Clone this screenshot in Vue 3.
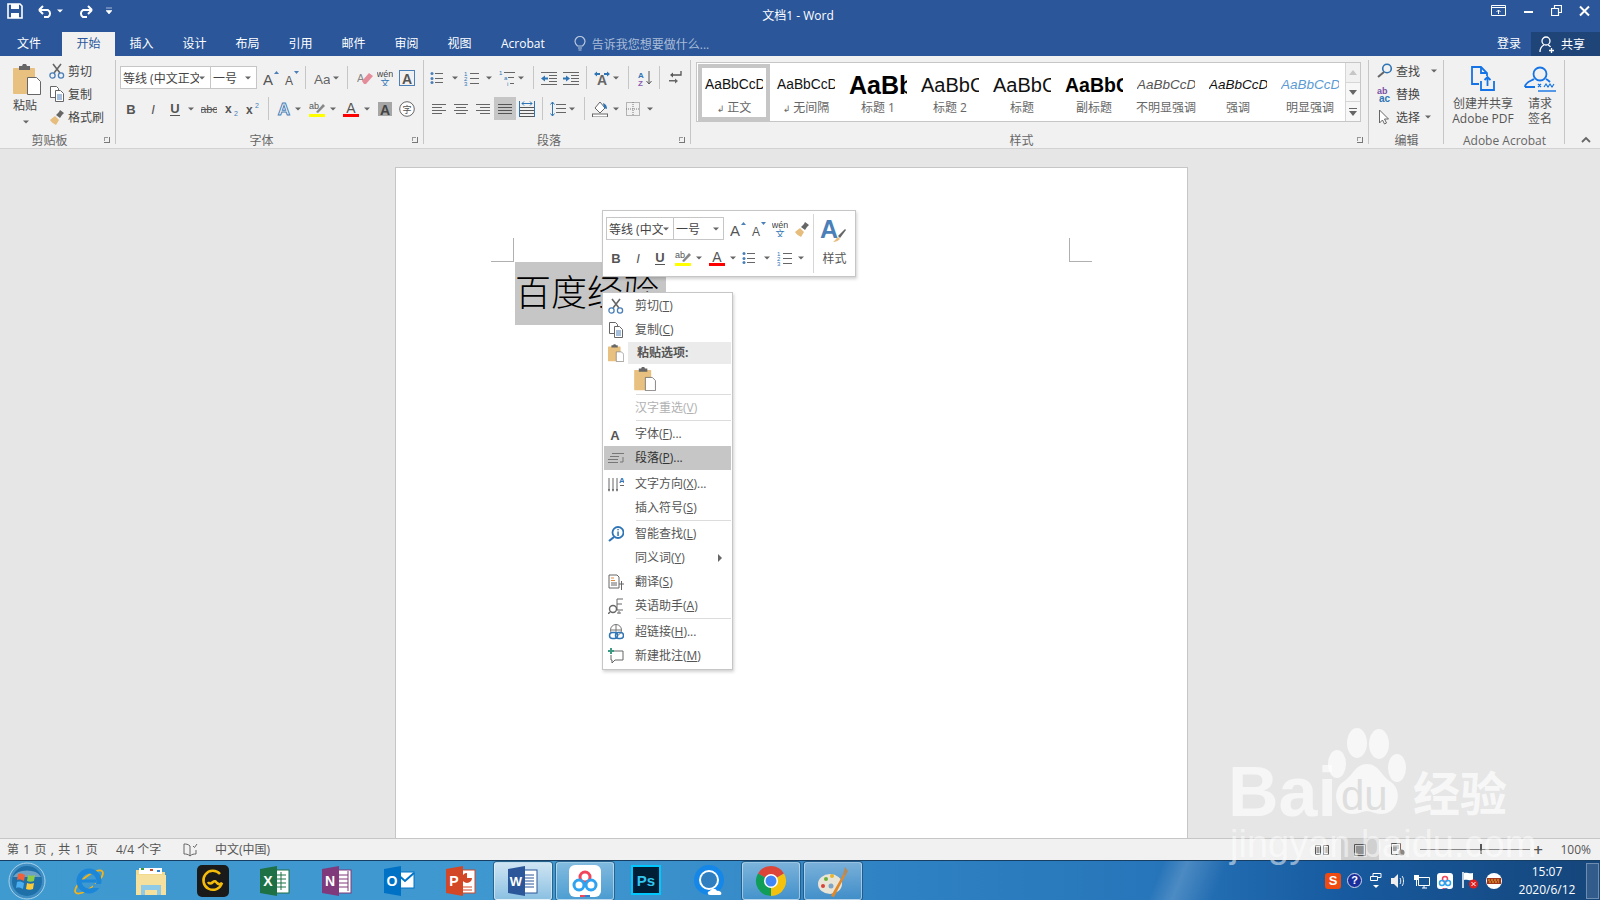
<template>
  <div class="app">
    <svg class="defs" width="0" height="0">
      <defs>
        <g id="caret"><path d="M0 6.5h6L3 9.5z" fill="#666" /></g>
        <g id="sep"><rect width="1" height="23" fill="#c6c6c6" /></g>
        <g id="cut" fill="none"><path d="M4 1l7 9M12 1L5 10" stroke="#666" stroke-width="1.6" /><circle cx="3.5" cy="12.5" r="2.6" stroke="#4a7fb8" stroke-width="1.3" /><circle cx="12" cy="12.5" r="2.6" stroke="#4a7fb8" stroke-width="1.3" /></g>
        <g id="copy" fill="#fff" stroke="#666"><path d="M1.5.5h6l2 2v9h-8z" /><path d="M6.5 4.5h5l3 3v8h-8z" /><path d="M8 9h5M8 11h5M8 13h5" stroke="#4a7fb8" /></g>
        <g id="brush"><path d="M1 11l5-4 4 4-3 5c-2-1-5-3-6-5z" fill="#e6bd7c" /><path d="M7 6l3-3 1-2 4 3-2 2-2 3z" fill="#666" /></g>
        <g id="paste"><rect x="0" y="4" width="22" height="26" rx="1" fill="#e8c07f" /><path d="M6 4V2h3l1-2h3l1 2h3v4H6z" fill="#666" /><path d="M14.500 13.500h9l4 4v13h-13z" fill="#fff" stroke="#666" /></g>
        <g id="grow"><text x="0" y="15" font-size="15" fill="#555">A</text><path d="M11 4l2.500-3L16 4z" fill="#4a7fb8" /></g>
        <g id="shrink"><text x="1" y="15" font-size="12" fill="#555">A</text><path d="M10 1l2.500 3L15 1z" fill="#4a7fb8" /></g>
        <g id="aa"><text x="0" y="14" font-size="13.500" fill="#666">Aa</text></g>
        <g id="eraser"><text x="0" y="12" font-size="11" fill="#888">A</text><path d="M5 11l7-8 4 3-7 8H7z" fill="#e58c9b" /></g>
        <g id="wen"><text x="8" y="7" font-size="9" text-anchor="middle" fill="#444">wén</text><text x="8" y="16" font-size="9" text-anchor="middle" fill="#2f75b5" class="cjk">文</text></g>
        <g id="boxa"><rect x=".5" y=".5" width="15" height="15" fill="none" stroke="#4a7fb8" /><text x="8" y="13.500" font-size="14" font-weight="700" text-anchor="middle" fill="#555">A</text></g>
        <g id="bold"><text x="8" y="13" font-size="13" font-weight="700" text-anchor="middle" fill="#555">B</text></g>
        <g id="italic"><text x="8" y="13" font-size="13" font-style="italic" text-anchor="middle" fill="#555">I</text></g>
        <g id="under"><text x="8" y="12" font-size="13" font-weight="700" text-anchor="middle" fill="#555">U</text><rect x="3" y="14" width="10" height="1" fill="#555" /></g>
        <g id="strike"><text x="8" y="12" font-size="11" text-anchor="middle" fill="#555">abc</text><rect x="0" y="8" width="16" height="1" fill="#555" /></g>
        <g id="sub"><text x="0" y="12" font-size="12" font-weight="700" fill="#555">x</text><text x="9" y="15" font-size="7" fill="#4a7fb8">2</text></g>
        <g id="sup"><text x="0" y="13" font-size="12" font-weight="700" fill="#555">x</text><text x="9" y="7" font-size="7" fill="#4a7fb8">2</text></g>
        <g id="fx"><text x="8" y="14" font-size="17" font-weight="700" text-anchor="middle" fill="#fff" stroke="#4a7fb8">A</text></g>
        <g id="hilite"><text x="0" y="8" font-size="9" fill="#555">ab</text><path d="M7 11l7-8 2 2-7 7z" fill="#888" /><rect y="13" width="16" height="4" fill="#ff0" /></g>
        <g id="red"><text x="8" y="12" font-size="14" text-anchor="middle" fill="#555">A</text><rect y="13" width="16" height="4" fill="#f00" /></g>
        <g id="shadeA"><rect x="1" y="1" width="14" height="14" fill="#a6a6a6" /><text x="8" y="13.500" font-size="14" font-weight="700" text-anchor="middle" fill="#444">A</text></g>
        <g id="ring"><circle cx="8" cy="8" r="7.300" fill="#fff" stroke="#666" /><text x="8" y="11.500" font-size="9" text-anchor="middle" fill="#555" class="cjk">字</text></g>
        <g id="bullets" fill="#666"><path d="M5 3h8v1H5zM5 8h8v1H5zM5 12h8v1H5z" /><circle cx="2" cy="3.500" r="1.500" fill="#4a7fb8" /><circle cx="2" cy="8.500" r="1.500" fill="#4a7fb8" /><circle cx="2" cy="12.500" r="1.500" fill="#4a7fb8" /></g>
        <g id="nums" fill="#666"><path d="M6 3h9v1H6zM6 8h9v1H6zM6 13h9v1H6z" /><text x="0" y="5.500" font-size="6" fill="#2f75b5">1</text><text x="0" y="10.500" font-size="6" fill="#2f75b5">2</text><text x="0" y="15.500" font-size="6" fill="#2f75b5">3</text></g>
        <g id="multi" fill="#666"><path d="M5 2h11v1H5zM9 7h6v1H9zM11 13h4v1h-4z" /><text x="0" y="5" font-size="6" fill="#2f75b5">1</text><text x="5" y="10" font-size="6" fill="#2f75b5">a</text><text x="8" y="16" font-size="6" fill="#2f75b5">i</text></g>
        <g id="dec" fill="#666"><path d="M0 2h16v1H0zM8 5h8v1H8zM8 8h8v1H8zM8 11h8v1H8zM0 14h16v1H0z" /><path d="M0 8.500l4-3v2h3v2H4v2z" fill="#2f75b5" /></g>
        <g id="inc" fill="#666"><path d="M0 2h16v1H0zM8 5h8v1H8zM8 8h8v1H8zM8 11h8v1H8zM0 14h16v1H0z" /><path d="M7 8.500l-4-3v2H0v2h3v2z" fill="#2f75b5" /></g>
        <g id="asian"><text x="8" y="15" font-size="14" font-weight="700" text-anchor="middle" fill="#666">A</text><path d="M0 4l3-2.500v1.500h3v2H3v1.500zM16 4l-3-2.500v1.500h-3v2h3v1.500z" fill="#2f75b5" /></g>
        <g id="sort"><text x="1" y="7.500" font-size="8" font-weight="700" fill="#2f75b5">A</text><text x="1" y="16" font-size="8" font-weight="700" fill="#8a5db0">Z</text><path d="M12 1v12M9.500 11l2.500 3 2.500-3" fill="none" stroke="#555" /></g>
        <g id="pil" fill="#666"><path d="M14 1v4H6" fill="none" stroke="#555" stroke-width="1.300" /><path d="M3 5l3-2.500v5z" fill="#555" /><path d="M2 10h6v1.500H2z" /><path d="M11 11l-3-2.500v5z" /></g>
        <g id="al" fill="#666"><path d="M0 3h14v1H0zM0 6h10v1H0zM0 9h14v1H0zM0 12h10v1H0z" /></g>
        <g id="ac" fill="#666"><path d="M0 3h14v1H0zM2 6h10v1H2zM0 9h14v1H0zM2 12h10v1H2z" /></g>
        <g id="ar" fill="#666"><path d="M0 3h14v1H0zM4 6h10v1H4zM0 9h14v1H0zM4 12h10v1H4z" /></g>
        <g id="aj" fill="#555"><path d="M4 7h14v1H4zM4 10h14v1H4zM4 13h14v1H4zM4 16h14v1H4z" /></g>
        <g id="ad" fill="#555"><path d="M0 6h16v1H0zM0 9h16v1H0zM0 12h16v1H0zM0 15h16v1H0z" /><path d="M3 2.500h10M3 2.500l2-2M3 2.500l2 2M13 2.500l-2-2M13 2.500l-2 2M.5 0v16M15.500 0v16" fill="none" stroke="#2f75b5" /></g>
        <g id="lines" fill="#666"><path d="M6 3h10v1H6zM6 7h10v1H6zM6 11h10v1H6z" /><path d="M2.500 1v14M.5 3.500l2-2.500 2 2.500M.5 12.500l2 2.500 2-2.500" fill="none" stroke="#2f75b5" /></g>
        <g id="shade"><path d="M3 7l5-6 5 6-5 5z" fill="#fff" stroke="#666" /><path d="M11 2c3 1 4 3 4 6l-3-1z" fill="#2f75b5" /><rect x=".5" y="13" width="15" height="3" fill="#fff" stroke="#666" /></g>
        <g id="bord"><rect x=".5" y="1.500" width="13" height="13" fill="none" stroke="#777" stroke-dasharray="1 1" /><path d="M7 1v14M0 8h14" stroke="#777" stroke-dasharray="1 1" /></g>
        <g id="find"><circle cx="10" cy="5.500" r="4.300" fill="none" stroke="#2f75b5" stroke-width="1.600" /><path d="M7 9l-6 5" stroke="#666" stroke-width="2" /></g>
        <g id="repl"><text x="0" y="7.500" font-size="9" font-weight="700" fill="#7a4fa5">ab</text><text x="2" y="15.500" font-size="10" font-weight="700" fill="#2f75b5">ac</text></g>
        <g id="select"><path d="M2.500 1v13l3-3 2 4 2-1-2-4h4z" fill="#fff" stroke="#666" /></g>
        <g id="pdf" fill="none" stroke="#1473e6" stroke-width="1.800"><path d="M8 18H1V1h9l6 6v3" /><path d="M10 1v6h6" /><path d="M10 15v9h13v-9" /><path d="M16.500 20v-9M13.500 14l3-3 3 3" /></g>
        <g id="sign" fill="none" stroke="#1473e6" stroke-width="1.800"><circle cx="16" cy="8" r="6.500" /><path d="M1 21c0-5 6-6 9-8M22 13c2 1 3 2 4 3M1 21h10" /><path d="M14 18l3 3M17 18l-3 3M20 21l2-3 2 3 2-3 2 3 2-3" stroke-width="1.200" /><path d="M14 25h18" stroke-width="1.400" /></g>
        <g id="styleA"><text x="0" y="20" font-size="25" font-weight="700" fill="#4a7fb8">A</text><path d="M13 24c3-2 3-4 5-5l2 2c-2 2-4 3-7 3z" fill="#e6bd7c" /><path d="M18 18l7-7 1 1-6 8z" fill="#666" /></g>
        <g id="mfont"><text x="7" y="14" font-size="13" font-weight="700" text-anchor="middle" fill="#555">A</text></g>
        <g id="mpara" fill="#777"><path d="M4 3h12v1H4zM2 6h9v1H2zM0 9h10v1H0zM0 12h10v1H0z" /><path d="M15 7v5h-3" fill="none" stroke="#777" /></g>
        <g id="mdir" fill="#666"><path d="M1 2v13M5 2v13M9 2v13" stroke="#666" /><path d="M0 13l1 3 1-3zM4 13l1 3 1-3zM8 13l1 3 1-3zM12 9h4v1h-4z" /><text x="11" y="7" font-size="8" font-weight="700" fill="#2f75b5">A</text></g>
        <g id="msmart"><circle cx="10" cy="6.500" r="5.500" fill="#fff" stroke="#2f75b5" stroke-width="1.800" /><path d="M9.300 3h1.500v1.300H9.300zM9.300 5.500h1.500V10H9.300z" fill="#2f75b5" /><path d="M6 11l-5 4" stroke="#2f75b5" stroke-width="2.200" /></g>
        <g id="mtrans" fill="none" stroke="#666"><path d="M1 1h8l2 2v11H1z" /><path d="M3 4h3M3 6.500h4" stroke="#e3893a" /><path d="M3 9h6M3 11h6" /><path d="M11 10h5M13.500 7v9" /></g>
        <g id="meng" fill="none" stroke="#666"><circle cx="5" cy="11" r="3.500" stroke-width="1.400" /><path d="M2 14l-2 2" stroke-width="1.400" /><path d="M15 1H9v11h6M9 6h5" /><circle cx="11" cy="15" r="1.200" /></g>
        <g id="mlink"><circle cx="8" cy="6" r="5.500" fill="none" stroke="#777" /><path d="M3 6h10M8 .5v11" stroke="#777" /><rect x="1.500" y="8.500" width="8" height="6" rx="3" fill="#fff" stroke="#2f75b5" stroke-width="1.500" /><rect x="7.500" y="8.500" width="8" height="6" rx="3" fill="none" stroke="#2f75b5" stroke-width="1.500" /></g>
        <g id="mnote"><path d="M5 3h10v9H7l-3 3v-3H3V7" fill="none" stroke="#666" /><path d="M2 0h2v2h2v2H4v2H2V4H0V2h2z" fill="#3c9a84" /></g>
        <g id="orb"><circle cx="19" cy="19" r="18" fill="#3f8fc4" stroke="#a9d3ea" /><circle cx="19" cy="19" r="15" fill="#1f6fa8" /><path d="M5 15a15 10 0 0 1 28 0z" fill="#fff" opacity=".35" /><path d="M10 12c3-1 5 0 7 1l-1 6c-2-1-4-2-7-1z" fill="#f0603a" /><path d="M20 13c2 1 5 1 7 0l-1 6c-2 1-5 1-7 0z" fill="#8ccb45" /><path d="M9 20c3-1 5 0 7 1l-1 6c-2-1-4-2-7-1z" fill="#4aaef0" /><path d="M19 21c2 1 5 1 7 0l-1 6c-2 1-5 1-7 0z" fill="#fbcb3a" /></g>
        <g id="ie"><ellipse cx="16" cy="17" rx="17" ry="6" transform="rotate(-38 16 17)" fill="none" stroke="#f2b316" stroke-width="1.800" /><circle cx="16" cy="16" r="10" fill="none" stroke="#1c86d8" stroke-width="5" /><rect x="8" y="14.500" width="15" height="3" fill="#1c86d8" /><path d="M20 19h8v4h-8z" fill="#3f97cf" /></g>
        <g id="folder"><path d="M1 5h10l2 2h17v22H1z" fill="#f2d98b" /><rect x="4" y="3" width="23" height="6" fill="#fff" /><rect x="6" y="3" width="3" height="2" fill="#3c9a3c" /><rect x="15" y="4" width="3" height="2" fill="#c84a2e" /><rect x="22" y="5" width="3" height="2" fill="#2f7fd0" /><rect x="1" y="10" width="30" height="20" fill="#f5e09e" /><path d="M6 30V20h20v10h-4v-5H10v5z" fill="#8fcbe8" /></g>
        <g id="gold"><rect width="32" height="32" rx="5" fill="#1a1a1a" /><path d="M23 9a9.500 9.500 0 1 0 2 9c-2 2-4 1-5 0s-2-3-4-1-4 2-5 0" fill="none" stroke="#f5bb0b" stroke-width="2.500" /></g>
        <g id="word"><rect x="14" y="5" width="16" height="23" fill="#fff" stroke="#2b579a" /><path d="M18 10h9M18 13h9M18 16h9M18 19h9M18 22h9" stroke="#2b579a" /><path d="M1 4L18 1v30L1 28z" fill="#2b579a" /><text x="9" y="21" font-size="13" font-weight="700" text-anchor="middle" fill="#fff">W</text></g>
        <g id="xl"><rect x="14" y="5" width="16" height="23" fill="#fff" stroke="#1e7145" /><path d="M18 10h9M18 14h9M18 18h9M18 22h9M22 7v18" stroke="#1e7145" /><path d="M1 4L18 1v30L1 28z" fill="#1e7145" /><text x="9" y="21" font-size="14" font-weight="700" text-anchor="middle" fill="#fff">X</text></g>
        <g id="one"><rect x="14" y="5" width="16" height="23" fill="#fff" stroke="#80397b" /><path d="M18 10h9M18 14h9M18 18h9M18 22h9M27 6v20" stroke="#80397b" /><path d="M1 4L18 1v30L1 28z" fill="#80397b" /><text x="9" y="21" font-size="14" font-weight="700" text-anchor="middle" fill="#fff">N</text></g>
        <g id="out"><rect x="13" y="7" width="18" height="16" fill="#fff" stroke="#0072c6" /><path d="M13 8l9 8 9-8" fill="none" stroke="#0072c6" stroke-width="2" /><path d="M1 4L18 1v30L1 28z" fill="#0072c6" /><text x="9" y="21" font-size="14" font-weight="700" text-anchor="middle" fill="#fff">O</text></g>
        <g id="ppt"><rect x="14" y="5" width="16" height="23" fill="#fff" stroke="#d24726" /><path d="M22 8a5 5 0 1 0 5 5h-5z" fill="#d24726" /><path d="M18 22h9M18 25h9" stroke="#d24726" /><path d="M1 4L18 1v30L1 28z" fill="#d24726" /><text x="9" y="21" font-size="14" font-weight="700" text-anchor="middle" fill="#fff">P</text></g>
        <g id="pan"><rect width="32" height="32" rx="6" fill="#fff" /><circle cx="16" cy="12" r="5" fill="none" stroke="#f0455a" stroke-width="3" /><circle cx="10" cy="20" r="5" fill="none" stroke="#2fa3f0" stroke-width="3" /><circle cx="22" cy="20" r="5" fill="none" stroke="#2fa3f0" stroke-width="3" /><rect x="11" y="30" width="5" height="2" fill="#f0455a" /><rect x="16" y="30" width="5" height="2" fill="#2f7fd0" /></g>
        <g id="ps"><rect x="1" y="1" width="28" height="28" fill="#001e36" stroke="#00c8ff" stroke-width="2" /><text x="15" y="21" font-size="15" font-weight="700" text-anchor="middle" fill="#31c5f0">Ps</text></g>
        <g id="qq"><circle cx="16" cy="15" r="12.500" fill="#fff" stroke="#1587e8" stroke-width="5" /><circle cx="16" cy="15" r="8" fill="#2f7fc0" /><path d="M17 30c-3 0-3-4 0-4 1-3 6-3 7 0 4-1 6 4 3 4z" fill="#fff" /></g>
        <g id="chrome"><path d="M3 8.500A15 15 0 0 1 29 8.500L16 16z" fill="#db4437" /><path d="M29 8.500A15 15 0 0 1 16 31L16 16z" fill="#f4c20d" /><path d="M16 31A15 15 0 0 1 3 8.500L16 16z" fill="#0f9d58" /><circle cx="16" cy="16" r="7" fill="#fff" /><circle cx="16" cy="16" r="5.500" fill="#4285f4" /></g>
        <g id="palette"><ellipse cx="13" cy="19" rx="12" ry="10" fill="#e9e5d6" /><circle cx="6" cy="21" r="2" fill="#d9433c" /><circle cx="9" cy="14" r="2" fill="#6aaf3c" /><circle cx="15" cy="11" r="2" fill="#e8b52f" /><circle cx="14" cy="21" r="2.500" fill="#7fa4c4" /><path d="M14 31l13-23 2 1-12 23z" fill="#e0872a" /><path d="M26 9l2-7 3 4-2 4z" fill="#b48a5a" /></g>
      </defs>
    </svg>

    <header class="title-bar">
      <div class="qat">
        <svg class="save" width="16" height="16" viewBox="0 0 16 16"><path d="M1 1h12l2 2v12H1z" fill="none" stroke="#fff" stroke-width="1.600" /><path d="M4 1h8v5H4zM4 10h8v5H4z" fill="#fff" /></svg>
        <svg class="undo" width="17" height="14" viewBox="0 0 17 14"><path d="M2 6h9a4 4 0 0 1 0 7H7M2 6l4-4M2 6l4 4" fill="none" stroke="#fff" stroke-width="2" /></svg>
        <svg class="qc" width="6" height="16" viewBox="0 0 6 16"><path d="M0 6.500h6L3 9.500z" fill="#fff" /></svg>
        <svg class="redo" width="17" height="14" viewBox="0 0 17 14"><path d="M15 6H6a4 4 0 0 0 0 7h4M15 6l-4-4M15 6l-4 4" fill="none" stroke="#fff" stroke-width="2" /></svg>
        <svg class="qcust" width="6" height="8" viewBox="0 0 6 8"><path d="M0 1h6M0 3.500h6L3 7z" fill="#fff" stroke="#fff" stroke-width=".6" /></svg>
      </div>
      <div class="doc-title">文档1 - Word</div>
      <div class="win">
        <svg width="16" height="12" viewBox="0 0 16 12"><path d="M.5.500h14v10H.5zM.5 2.500h14" fill="none" stroke="#fff" /><path d="M7.500 9V5M5.500 7l2-2 2 2" fill="none" stroke="#fff" /></svg>
        <svg width="10" height="12" viewBox="0 0 10 12"><rect y="6" width="9" height="2" fill="#fff" /></svg>
        <svg width="11" height="12" viewBox="0 0 11 12"><path d="M.5 3.500h7v7h-7zM3.500 3V.5h7v7H8" fill="none" stroke="#fff" stroke-width="1.200" /></svg>
        <svg width="11" height="12" viewBox="0 0 11 12"><path d="M1 1.500l9 9M10 1.500l-9 9" stroke="#fff" stroke-width="2" /></svg>
      </div>
    </header>

    <nav class="tabs">
      <span class="tab file">文件</span>
      <span v-for="t in tabs" :key="t" class="tab" :class="{ active: t === '开始' }">{{ t }}</span>
      <span class="tab acrobat">Acrobat</span>
      <span class="tell">
        <svg width="12" height="16" viewBox="0 0 12 16"><path d="M3.500 10C2 8.500 1 7.500 1 5.500a5 5 0 0 1 10 0c0 2-1 3-2.500 4.500zM4 12h4M4.500 14h3" fill="none" stroke="#b8c7de" stroke-width="1.200" /></svg>
        告诉我您想要做什么...
      </span>
      <span class="login">登录</span>
      <span class="share">
        <svg width="17" height="17" viewBox="0 0 17 17"><circle cx="7" cy="5" r="4" fill="none" stroke="#fff" stroke-width="1.300" /><path d="M1 16c0-4 2-6 4-7M9 9c1 .5 2 1 2.500 2M12.500 12v5M10 14.500h5" fill="none" stroke="#fff" stroke-width="1.300" /></svg>
        共享
      </span>
    </nav>

    <section class="ribbon">
      <div class="group g-clip">
        <div class="clip">
          <div class="paste-btn">
            <svg width="28" height="31" viewBox="0 0 28 31"><use href="#paste" /></svg>
            <span>粘贴</span>
            <svg class="paste-caret" width="6" height="16" viewBox="0 0 6 16"><use href="#caret" /></svg>
          </div>
          <div class="clip-list">
            <div class="clip-item"><svg width="16" height="16" viewBox="0 0 16 16"><use href="#cut" /></svg>剪切</div>
            <div class="clip-item"><svg width="16" height="16" viewBox="0 0 16 16"><use href="#copy" /></svg>复制</div>
            <div class="clip-item"><svg width="16" height="16" viewBox="0 0 16 16"><use href="#brush" /></svg>格式刷</div>
          </div>
        </div>
        <div class="g-label">剪贴板</div>
        <i class="launcher"></i>
      </div>

      <div class="group g-font">
        <div class="row first">
          <div class="combo combo-font"><span class="combo-text">等线 (中文正文)</span><svg width="6" height="16" viewBox="0 0 6 16"><use href="#caret" /></svg></div>
          <div class="combo combo-size"><span class="combo-text">一号</span><svg width="6" height="16" viewBox="0 0 6 16"><use href="#caret" /></svg></div>
          <svg v-for="t in fontRow1" :key="t.k" class="ic" :width="t.w" :height="t.h" :viewBox="`0 0 ${t.w} ${t.h}`" :style="{ marginLeft: t.ml + 'px' }"><use :href="'#' + t.i" /></svg>
        </div>
        <div class="row">
          <svg v-for="t in fontRow2" :key="t.k" class="ic" :width="t.w" :height="t.h" :viewBox="`0 0 ${t.w} ${t.h}`" :style="{ marginLeft: t.ml + 'px' }"><use :href="'#' + t.i" /></svg>
        </div>
        <div class="g-label">字体</div>
        <i class="launcher"></i>
      </div>

      <div class="group g-para">
        <div v-for="(row, n) in paraRows" :key="n" class="row" :class="{ first: n === 0 }">
          <svg v-for="t in row" :key="t.k" class="ic" :class="{ pressed: t.i === 'aj' }" :width="t.w" :height="t.h" :viewBox="`0 0 ${t.w} ${t.h}`" :style="{ marginLeft: t.ml + 'px' }"><use :href="'#' + t.i" /></svg>
        </div>
        <div class="g-label">段落</div>
        <i class="launcher"></i>
      </div>

      <div class="group g-styles">
        <div class="gallery">
          <div v-for="s in styles" :key="s.name" class="style-item" :class="{ selected: s.on }">
            <div class="sample" :class="s.cls">{{ s.sample }}</div>
            <div class="style-name"><span v-if="s.mark" class="para-mark">↲</span>{{ s.name }}</div>
          </div>
          <div class="scroll">
            <span class="sb dim"><svg width="8" height="5" viewBox="0 0 8 5"><path d="M0 5l4-5 4 5z" fill="#c6c6c6" /></svg></span>
            <span class="sb"><svg width="8" height="5" viewBox="0 0 8 5"><path d="M0 0l4 5 4-5z" fill="#666" /></svg></span>
            <span class="sb"><svg width="8" height="8" viewBox="0 0 8 8"><path d="M0 0h8v1H0zM0 3l4 5 4-5z" fill="#666" /></svg></span>
          </div>
        </div>
        <div class="g-label">样式</div>
        <i class="launcher"></i>
      </div>

      <div class="group g-edit">
        <div class="edit-list">
          <div class="edit-item"><svg width="16" height="16" viewBox="0 0 16 16"><use href="#find" /></svg>查找<svg class="ec1" width="6" height="16" viewBox="0 0 6 16"><use href="#caret" /></svg></div>
          <div class="edit-item"><svg width="16" height="16" viewBox="0 0 16 16"><use href="#repl" /></svg>替换</div>
          <div class="edit-item"><svg width="16" height="16" viewBox="0 0 16 16"><use href="#select" /></svg>选择<svg class="ec2" width="6" height="16" viewBox="0 0 6 16"><use href="#caret" /></svg></div>
        </div>
        <div class="g-label">编辑</div>
      </div>

      <div class="group g-acro">
        <div class="acro">
          <div class="acro-btn a1"><svg width="24" height="26" viewBox="0 0 24 26"><use href="#pdf" /></svg><span>创建并共享<br />Adobe PDF</span></div>
          <div class="acro-btn a2"><svg width="33" height="27" viewBox="0 0 33 27"><use href="#sign" /></svg><span>请求<br />签名</span></div>
        </div>
        <div class="g-label">Adobe Acrobat</div>
      </div>

      <svg class="collapse" width="10" height="7" viewBox="0 0 10 7"><path d="M1 6l4-4 4 4" fill="none" stroke="#666" stroke-width="1.800" /></svg>
    </section>

    <main class="doc">
      <div class="page">
        <i class="crop crop-l"></i>
        <i class="crop crop-r"></i>
        <span class="selected-text">百度经验</span>
      </div>
    </main>

    <footer class="status">
      <span class="s1">第 1 页 , 共 1 页</span>
      <span class="s2">4/4 个字</span>
      <svg class="s3" width="15" height="14" viewBox="0 0 15 14"><path d="M7 3C5 1 3 1 1 1v10c2 0 4 0 6 2 2-2 4-2 6-2V7M7 3v10M10 3l1.500 1.500L14 1" fill="none" stroke="#666" /></svg>
      <span class="s4">中文(中国)</span>
      <div class="st-right">
        <span class="view"><svg width="14" height="12" viewBox="0 0 14 12"><path d="M.5 1.500h5v9h-5zM8.500 1.500h5v9h-5zM1.500 4h3M1.500 6h3M1.500 8h3M9.500 4h3M9.500 6h3M9.500 8h3" fill="none" stroke="#555" /></svg></span>
        <span class="view on"><svg width="14" height="12" viewBox="0 0 14 12"><path d="M1.500.5h11v11h-11zM3 3h8M3 5h8M3 7h8M3 9h8" fill="none" stroke="#555" /></svg></span>
        <span class="view"><svg width="14" height="13" viewBox="0 0 14 13"><path d="M.5.500h9v11h-9zM2 3h6M2 5h6M2 7h4" fill="none" stroke="#555" /><circle cx="10.500" cy="9.500" r="3" fill="#888" /></svg></span>
        <span class="zoom-slider"><i class="zoom-thumb"></i></span>
        <span class="plus">+</span>
        <span class="pct">100%</span>
      </div>
    </footer>

    <div class="taskbar">
      <svg class="orb" width="38" height="38" viewBox="0 0 38 38"><use href="#orb" /></svg>
      <div class="slots">
        <div v-for="s in apps" :key="s.i" class="slot" :class="{ btn: s.btn, active: s.active }">
          <svg width="32" height="32" viewBox="0 0 32 32"><use :href="'#' + s.i" /></svg>
        </div>
      </div>
      <div class="tray">
        <span class="t-s">S</span>
        <span class="t-help">?</span>
        <svg class="t-win" width="12" height="18" viewBox="0 0 12 18"><path d="M.5 4.500h7v4h-7zM3 4V1.500h8v4H8" fill="none" stroke="#fff" /><path d="M3 13h6l-3 3z" fill="#fff" /></svg>
        <svg class="t-vol" width="15" height="14" viewBox="0 0 15 14"><path d="M0 4h3l4-4v14l-4-4H0z" fill="#eee" /><path d="M9 4c1 1 1 5 0 6M11 2c2 2 2 8 0 10" fill="none" stroke="#eee" /></svg>
        <svg class="t-net" width="17" height="17" viewBox="0 0 17 17"><path d="M5.500 5.500h11v8h-11zM9 16h5M11 14v2" fill="none" stroke="#fff" /><path d="M2 0v3M4.500 0v3M1 3h5v5H4v6H3V8H1z" fill="#fff" /></svg>
        <svg class="t-pan" width="16" height="16" viewBox="0 0 32 32"><use href="#pan" /></svg>
        <svg class="t-flag" width="16" height="17" viewBox="0 0 16 17"><path d="M1 0v16" stroke="#fff" stroke-width="1.500" /><path d="M2 1c3-1 5 1 9 0v7c-4 1-6-1-9 0z" fill="#fff" /><circle cx="11.500" cy="12" r="4.500" fill="#e02020" /><path d="M9.500 10l4 4M13.500 10l-4 4" stroke="#fff" /></svg>
        <svg class="t-red" width="16" height="16" viewBox="0 0 16 16"><circle cx="8" cy="8" r="8" fill="#fff" /><rect x="1" y="5" width="14" height="6" fill="#a4381c" /><path d="M2 7h12M3 9h10" stroke="#e8b52f" stroke-dasharray="2 1" /></svg>
        <div class="clock"><span>15:07</span><span>2020/6/12</span></div>
        <i class="show-desktop"></i>
      </div>
    </div>

    <!-- floating mini toolbar -->
    <div class="mini">
      <div class="mini-rows">
        <div class="row mini-first">
          <div class="combo mini-font"><span class="combo-text">等线 (中文正文)</span><svg width="6" height="16" viewBox="0 0 6 16"><use href="#caret" /></svg></div>
          <div class="combo mini-size"><span class="combo-text">一号</span><svg width="6" height="16" viewBox="0 0 6 16"><use href="#caret" /></svg></div>
          <svg v-for="t in miniRow1" :key="t.k" class="ic" :width="t.w" :height="t.h" :viewBox="`0 0 ${t.w} ${t.h}`" :style="{ marginLeft: t.ml + 'px' }"><use :href="'#' + t.i" /></svg>
        </div>
        <div class="row mini-second">
          <svg v-for="t in miniRow2" :key="t.k" class="ic" :width="t.w" :height="t.h" :viewBox="`0 0 ${t.w} ${t.h}`" :style="{ marginLeft: t.ml + 'px' }"><use :href="'#' + t.i" /></svg>
        </div>
      </div>
      <div class="mini-style">
        <svg width="30" height="26" viewBox="0 0 30 26"><use href="#styleA" /></svg>
        <span>样式</span>
      </div>
    </div>

    <!-- context menu -->
    <div class="menu">
      <template v-for="m in menu" :key="m.id">
        <div v-if="m.sep" class="menu-sep"></div>
        <div v-else-if="m.head" class="menu-row head">
          <svg class="menu-ic" width="16" height="18" viewBox="0 0 28 31"><use href="#paste" /></svg>
          <span class="head-text">粘贴选项:</span>
        </div>
        <div v-else-if="m.pasteOpt" class="paste-opt">
          <svg width="22" height="24" viewBox="0 0 28 31"><use href="#paste" /></svg>
        </div>
        <div v-else class="menu-row" :class="{ hover: m.hover, off: m.off, gap: m.gap }">
          <span class="menu-ic"><svg v-if="m.i" width="16" height="16" viewBox="0 0 16 16"><use :href="'#' + m.i" /></svg></span>
          <span>{{ m.t }}(<u>{{ m.k }}</u>){{ m.rest }}</span>
          <svg v-if="m.sub" class="menu-arrow" width="4" height="8" viewBox="0 0 4 8"><path d="M0 0l4 4-4 4z" fill="#666" /></svg>
        </div>
      </template>
    </div>

    <!-- site watermark -->
    <div class="mark">
      <svg class="paw" width="80" height="90" viewBox="0 0 80 90">
        <ellipse cx="30" cy="15" rx="10" ry="15" fill="#f7f7f7" />
        <ellipse cx="52" cy="16" rx="10" ry="15" fill="#f7f7f7" />
        <ellipse cx="10" cy="36" rx="9" ry="14" fill="#f7f7f7" />
        <ellipse cx="70" cy="40" rx="9" ry="14" fill="#f7f7f7" />
        <path d="M40 36c12 0 14 12 24 18 12 8 8 32-10 32-6 0-10-3-14-3s-8 3-14 3C8 86 4 62 16 54c10-6 12-18 24-18z" fill="#f7f7f7" />
      </svg>
      <span class="m-bai">Bai</span>
      <span class="m-du">du</span>
      <span class="m-jy">经验</span>
      <span class="m-url">jingyan.baidu.com</span>
    </div>
  </div>
</template>

<script setup>
// turn [icon, centre x, w, h] lists into flow items with computed left margins
const place = (origin, list) => {
  let cur = origin
  return list.map(([i, c, w = 16, h = 16], k) => {
    const ml = c - w / 2 - cur
    cur = c + w / 2
    return { i, w, h, ml, k }
  })
}

const car = (c) => ['caret', c, 6]
const sep = (c) => ['sep', c, 1, 23]

const tabs = ['开始', '插入', '设计', '布局', '引用', '邮件', '审阅', '视图']

const fontRow1 = place(258, [
  ['grow', 272], ['shrink', 293], sep(306), ['aa', 323], car(337), sep(348),
  ['eraser', 366], ['wen', 386], ['boxa', 408]
])
const fontRow2 = place(116, [
  ['bold', 131], ['italic', 153], ['under', 175], car(191), ['strike', 209], ['sub', 233], ['sup', 254],
  sep(268), ['fx', 284], car(298), ['hilite', 317], car(333), ['red', 351], car(367), ['shadeA', 385], ['ring', 407]
])

const paraRows = [
  place(424, [
    ['bullets', 438], car(455), ['nums', 472], car(489), ['multi', 507], car(521), sep(533),
    ['dec', 549], ['inc', 571], sep(586), ['asian', 602], car(616), sep(628), ['sort', 645], sep(659), ['pil', 675]
  ]),
  place(424, [
    ['al', 440], ['ac', 462], ['ar', 484], ['aj', 505, 22, 23], ['ad', 527], sep(542), ['lines', 558], car(572), sep(584),
    ['shade', 600], car(616), ['bord', 634], car(650)
  ])
]

const styles = [
  { name: '正文', sample: 'AaBbCcDd', cls: 's-n', on: true, mark: true },
  { name: '无间隔', sample: 'AaBbCcDd', cls: 's-n', mark: true },
  { name: '标题 1', sample: 'AaBb', cls: 's-h1' },
  { name: '标题 2', sample: 'AaBbC', cls: 's-h2' },
  { name: '标题', sample: 'AaBbC', cls: 's-h2' },
  { name: '副标题', sample: 'AaBbC', cls: 's-h3' },
  { name: '不明显强调', sample: 'AaBbCcDd', cls: 's-i1' },
  { name: '强调', sample: 'AaBbCcDd', cls: 's-i2' },
  { name: '明显强调', sample: 'AaBbCcDd', cls: 's-i3' }
]

const apps = [
  { i: 'ie' }, { i: 'folder' }, { i: 'gold' }, { i: 'xl' }, { i: 'one' }, { i: 'out' }, { i: 'ppt' },
  { i: 'word', btn: true, active: true }, { i: 'pan', btn: true }, { i: 'ps' }, { i: 'qq' },
  { i: 'chrome', btn: true }, { i: 'palette', btn: true }
]

const miniRow1 = place(725, [['grow', 739], ['shrink', 760], ['wen', 781], ['brush', 803]])
const miniRow2 = place(603, [
  ['bold', 616], ['italic', 638], ['under', 660], ['hilite', 683], car(699), ['red', 717], car(733),
  ['bullets', 750], car(767), ['nums', 785], car(801)
])

const menu = [
  { id: 1, t: '剪切', k: 'T', i: 'cut' },
  { id: 2, t: '复制', k: 'C', i: 'copy' },
  { id: 3, head: true },
  { id: 4, pasteOpt: true },
  { id: 5, sep: true },
  { id: 6, t: '汉字重选', k: 'V', off: true },
  { id: 7, sep: true },
  { id: 8, t: '字体', k: 'F', rest: '...', i: 'mfont' },
  { id: 9, t: '段落', k: 'P', rest: '...', i: 'mpara', hover: true },
  { id: 10, t: '文字方向', k: 'X', rest: '...', i: 'mdir', gap: true },
  { id: 11, t: '插入符号', k: 'S' },
  { id: 12, sep: true },
  { id: 13, t: '智能查找', k: 'L', i: 'msmart' },
  { id: 14, t: '同义词', k: 'Y', sub: true },
  { id: 15, t: '翻译', k: 'S', i: 'mtrans' },
  { id: 16, t: '英语助手', k: 'A', i: 'meng' },
  { id: 17, sep: true },
  { id: 18, t: '超链接', k: 'H', rest: '...', i: 'mlink' },
  { id: 19, t: '新建批注', k: 'M', i: 'mnote' }
]
</script>

<style>
html, body { margin: 0; background: #e6e6e6; }
</style>

<style scoped>
.app {
  position: relative;
  display: flex;
  flex-direction: column;
  width: 1600px;
  height: 900px;
  overflow: hidden;
  font-family: "Open Sans", "Noto Sans CJK SC", sans-serif;
  font-size: 12px;
  color: #444;
}
.defs { position: absolute; }
text { font-family: "Liberation Sans", sans-serif; }
text.cjk { font-family: "Noto Sans CJK SC", sans-serif; }

.title-bar {
  display: flex;
  align-items: center;
  justify-content: space-between;
  height: 32px;
  flex: none;
  background: #2b579a;
  color: #fff;
}
.qat { display: flex; align-items: center; width: 200px; padding-left: 7px; box-sizing: border-box; margin-top: -10px; }
.undo { margin-left: 14px; }
.qc { margin-left: 3px; }
.redo { margin-left: 14px; }
.qcust { margin-left: 12px; }
.doc-title { width: 800px; text-align: center; margin-top: -2px; margin-left: -95px; }
.win { display: flex; align-items: center; gap: 17px; padding-right: 10px; margin-top: -10px; }

.tabs {
  display: flex;
  align-items: stretch;
  height: 24px;
  flex: none;
  background: #2b579a;
  color: #fff;
  line-height: 23px;
}
.tab { width: 53px; text-align: center; }
.tab.file { width: 62px; text-align: left; padding-left: 17px; box-sizing: border-box; }
.tab.active { background: #f1f1f1; color: #2b579a; }
.tab.acrobat { width: auto; padding: 0 14px 0 15px; }
.tell { display: flex; align-items: center; gap: 6px; margin-left: 15px; color: #a9bcd8; }
.login { margin-left: auto; margin-right: 10px; }
.share { display: flex; align-items: center; gap: 5px; width: 69px; padding-left: 8px; box-sizing: border-box; background: #1e4478; }

.ribbon {
  position: relative;
  display: flex;
  height: 93px;
  flex: none;
  padding-top: 4px;
  box-sizing: border-box;
  background: #f1f1f1;
  border-bottom: 1px solid #d2d2d2;
}
.group { position: relative; display: flex; flex-direction: column; height: 88px; flex: none; color: #444; }
.group::after { content: ''; position: absolute; top: 0; right: 0; bottom: 4px; width: 1px; background: #c6c6c6; }
.g-label { margin-top: auto; margin-bottom: -2px; height: 18px; line-height: 18px; text-align: center; color: #666; }
.launcher { position: absolute; right: 6px; bottom: 5px; width: 6px; height: 6px; border-right: 1px solid #777; border-bottom: 1px solid #777; box-sizing: border-box; }
.launcher::before { content: ''; position: absolute; left: 0; top: 0; width: 3px; height: 3px; border-top: 1px solid #999; border-left: 1px solid #999; }
.g-clip { width: 116px; }
.g-font { width: 308px; }
.g-para { width: 267px; }
.g-styles { width: 678px; }
.g-edit { width: 75px; }
.g-acro { width: 121px; }
.g-clip .g-label, .g-font .g-label, .g-para .g-label, .g-styles .g-label { padding-right: 17px; }

.clip { display: flex; }
.paste-btn { display: flex; flex-direction: column; align-items: flex-start; width: 49px; padding: 4px 0 0 13px; box-sizing: border-box; line-height: 17px; }
.paste-btn span { margin-top: 2px; }
.paste-btn .paste-caret { margin: 0 0 0 10px; }
.clip-list { display: flex; flex-direction: column; margin-top: -1px; }
.clip-item { display: flex; align-items: center; gap: 3px; height: 23px; }

.row { display: flex; align-items: center; height: 23px; margin-top: 8px; }
.row.first { margin-top: 6px; }
.g-font .row.first { padding-left: 4px; }
.ic { flex: none; }
.ic.pressed { background: #c6c6c6; }

.combo {
  display: flex;
  align-items: center;
  height: 23px;
  box-sizing: border-box;
  border: 1px solid #c6c6c6;
  background: #fff;
  padding: 0 5px 0 2px;
  color: #444;
}
.combo-text { flex: 1; min-width: 0; overflow: hidden; white-space: nowrap; }
.combo-font { width: 91px; }
.combo-size { width: 47px; margin-left: -1px; }

.gallery {
  position: relative;
  display: flex;
  width: 665px;
  height: 60px;
  margin: 2px 0 0 5px;
  padding: 1px 0 0 1px;
  box-sizing: border-box;
  background: #fff;
  border: 1px solid #c6c6c6;
}
.style-item { width: 72px; height: 57px; flex: none; box-sizing: border-box; padding-top: 8px; text-align: center; }
.style-item.selected { border: 4px solid #c6c6c6; padding-top: 4px; }
.sample { width: 58px; height: 26px; margin: 0 auto; overflow: hidden; white-space: nowrap; text-align: left; font-family: "Liberation Sans", sans-serif; line-height: 26px; color: #111; }
.s-n { font-size: 13.8px; }
.s-h1 { font-size: 25px; font-weight: 700; color: #000; }
.s-h2 { font-size: 20px; }
.s-h3 { font-size: 19.5px; font-weight: 700; color: #000; }
.s-i1 { font-size: 13.5px; font-style: italic; color: #555; }
.s-i2 { font-size: 13.5px; font-style: italic; }
.s-i3 { font-size: 13.5px; font-style: italic; color: #5b9bd5; }
.style-name { height: 20px; line-height: 20px; color: #666; white-space: nowrap; }
.para-mark { margin-right: 3px; font-family: "DejaVu Sans", sans-serif; font-size: 9px; }
.scroll { display: flex; flex-direction: column; position: absolute; right: 0; top: 0; bottom: 0; width: 14px; border-left: 1px solid #d6d6d6; background: #f7f7f7; }
.sb { flex: 1; display: flex; align-items: center; justify-content: center; border-bottom: 1px solid #d6d6d6; }
.sb:last-child { border-bottom: 0; }
.sb.dim { background: #f1f1f1; }

.edit-list { display: flex; flex-direction: column; margin-top: -1px; padding-left: 8px; }
.edit-item { position: relative; display: flex; align-items: center; gap: 3px; height: 23px; }
.ec1 { margin-left: 8px; }
.ec2 { margin-left: 2px; }

.acro { display: flex; padding-top: 6px; color: #555; }
.acro-btn { display: flex; flex-direction: column; align-items: center; line-height: 15px; text-align: center; }
.acro-btn span { margin-top: 4px; white-space: nowrap; }
.a1 { width: 72px; padding-left: 3px; }
.a2 { width: 40px; margin-left: 1px; }
.a2 span { margin-top: 3px; }
.collapse { position: absolute; left: 1581px; bottom: 5px; }

.doc { flex: 1; min-height: 0; background: #e6e6e6; overflow: hidden; padding-top: 18px; }
.page {
  position: relative;
  width: 793px;
  height: 800px;
  margin-left: 395px;
  padding: 94px 0 0 119px;
  box-sizing: border-box;
  background: #fff;
  border: 1px solid #c6c6c6;
}
.crop { position: absolute; top: 70px; width: 23px; height: 24px; box-sizing: border-box; }
.crop-l { left: 95px; border-right: 1px solid #b0b0b0; border-bottom: 1px solid #b0b0b0; }
.crop-r { left: 673px; border-left: 1px solid #b0b0b0; border-bottom: 1px solid #b0b0b0; }
.selected-text {
  display: inline-block;
  width: 151px;
  height: 63px;
  box-sizing: border-box;
  background: #c6c6c6;
  font-family: "Noto Sans CJK SC", sans-serif;
  font-size: 36px;
  font-weight: 300;
  line-height: 56px;
  color: #000;
  white-space: nowrap;
}

.status { display: flex; align-items: center; height: 22px; flex: none; box-sizing: border-box; background: #f1f1f1; border-top: 1px solid #c6c6c6; color: #555; line-height: 19px; }
.s1 { margin-left: 7px; width: 109px; white-space: nowrap; word-spacing: 1.2px; }
.s2 { width: 67px; }
.s3 { margin-right: 17px; }
.st-right { display: flex; align-items: center; height: 100%; margin-left: auto; }
.view { display: flex; align-items: center; justify-content: center; width: 38px; height: 100%; }
.view.on { background: #d0d0d0; }
.zoom-slider { position: relative; width: 110px; height: 1px; margin-left: 3px; background: #888; }
.zoom-thumb { position: absolute; left: 60px; top: -5px; width: 2px; height: 10px; background: #555; }
.plus { width: 12px; margin-left: 2px; font-size: 17px; line-height: 17px; font-weight: 600; text-align: center; }
.pct { width: 47px; margin-right: 9px; text-align: right; }

.taskbar {
  position: relative;
  display: flex;
  align-items: center;
  height: 40px;
  flex: none;
  box-sizing: border-box;
  border-top: 1px solid #173e63;
  background:
    linear-gradient(112deg, transparent 72%, rgba(255, 255, 255, .18) 73.5%, transparent 76%),
    linear-gradient(90deg, #3f9ad0 0%, #3f97cf 35%, #2d80c2 58%, #2775ba 72%, #175a9f 84%, #15457a 100%);
  color: #fff;
}
.orb { flex: none; margin-left: 8px; margin-right: 12px; }
.slots { display: flex; height: 100%; }
.slot { display: flex; align-items: center; justify-content: center; width: 62px; height: 100%; box-sizing: border-box; }
.slot.btn { position: relative; }
.slot.btn::before {
  content: '';
  position: absolute;
  inset: 1px 2px 0;
  border: 1px solid rgba(255, 255, 255, .45);
  border-radius: 3px;
  background: linear-gradient(180deg, rgba(255, 255, 255, .35), rgba(255, 255, 255, .08));
  box-shadow: 0 0 0 1px rgba(20, 50, 80, .5);
}
.slot.active::before { background: linear-gradient(180deg, rgba(255, 255, 255, .75), rgba(255, 255, 255, .4)); }
.slot svg { position: relative; }
.tray { position: relative; display: flex; align-items: center; margin-left: auto; height: 100%; }
.t-s { width: 16px; height: 16px; border-radius: 3px; background: #ef4a12; color: #fff; font: 700 13px/16px "Liberation Sans", sans-serif; text-align: center; }
.t-help { width: 15px; height: 15px; margin-left: 6px; border-radius: 50%; background: #1b2f9c; border: 1px solid #cfd8e6; box-sizing: border-box; font: 700 11px/13px "Liberation Sans", sans-serif; text-align: center; }
.t-win { margin-left: 8px; }
.t-vol { margin-left: 9px; }
.t-net { margin-left: 7px; }
.t-pan { margin-left: 7px; }
.t-flag { margin-left: 9px; }
.t-red { margin-left: 8px; }
.clock { display: flex; flex-direction: column; align-items: center; width: 78px; margin-left: 6px; line-height: 18px; }
.show-desktop { width: 13px; height: 36px; margin-right: 1px; border: 1px solid rgba(255, 255, 255, .3); background: rgba(255, 255, 255, .12); box-sizing: border-box; }

.mini {
  position: absolute;
  left: 602px;
  top: 210px;
  display: flex;
  width: 254px;
  height: 67px;
  box-sizing: border-box;
  background: #fff;
  border: 1px solid #c6c6c6;
  box-shadow: 1px 2px 3px rgba(0, 0, 0, .18);
}
.mini-rows { width: 210px; flex: none; }
.mini-first { margin: 6px 0 0 3px; }
.mini-second { margin-top: 6px; }
.mini .combo { padding-right: 4px; }
.mini-font { width: 68px; }
.mini-size { width: 51px; margin-left: -1px; }
.mini-style { display: flex; flex-direction: column; align-items: center; width: 42px; margin: 3px 0; border-left: 1px solid #d6d6d6; padding-top: 4px; color: #555; }
.mini-style span { margin-top: 5px; }

.menu {
  position: absolute;
  left: 602px;
  top: 292px;
  width: 131px;
  height: 378px;
  padding: 1px;
  box-sizing: border-box;
  background: #fff;
  border: 1px solid #c6c6c6;
  box-shadow: 1px 2px 3px rgba(0, 0, 0, .18);
  color: #555;
}
.menu-row { position: relative; display: flex; align-items: center; height: 24px; line-height: 24px; }
.menu-row.gap { margin-top: 2px; }
.menu-row.hover { background: #c6c6c6; color: #333; }
.menu-row.off { color: #b1b1b1; }
.menu-ic { display: flex; width: 31px; padding-left: 4px; box-sizing: border-box; flex: none; }
svg.menu-ic { width: 16px; margin-left: 4px; margin-right: 4px; padding: 0; }
.menu-arrow { position: absolute; right: 9px; top: 8px; }
.menu-row.head { height: 22px; line-height: 22px; font-weight: 700; }
.head-text { flex: 1; height: 22px; padding-left: 9px; background: #ebebeb; color: #555; }
.paste-opt { display: flex; align-items: center; height: 30px; padding-left: 30px; box-sizing: border-box; }
.menu-sep { height: 1px; margin: 0 0 1px 32px; background: #dcdcdc; }

.mark { position: absolute; left: 0; top: 0; width: 1600px; height: 900px; pointer-events: none; }
.paw { position: absolute; left: 1327px; top: 728px; }
.m-bai { position: absolute; left: 1228px; top: 752px; font: 700 70px/80px "Liberation Sans", sans-serif; color: rgba(255, 255, 255, .62); }
.m-du { position: absolute; left: 1341px; top: 771px; font: 400 42px/50px "Liberation Sans", sans-serif; color: #dedede; }
.m-jy { position: absolute; left: 1413px; top: 758px; font: 700 47px/66px "Noto Sans CJK SC", sans-serif; color: rgba(255, 255, 255, .72); white-space: nowrap; }
.m-url { position: absolute; left: 1230px; top: 822px; font: 400 38px/44px "Liberation Sans", sans-serif; color: rgba(255, 255, 255, .5); white-space: nowrap; }
</style>
